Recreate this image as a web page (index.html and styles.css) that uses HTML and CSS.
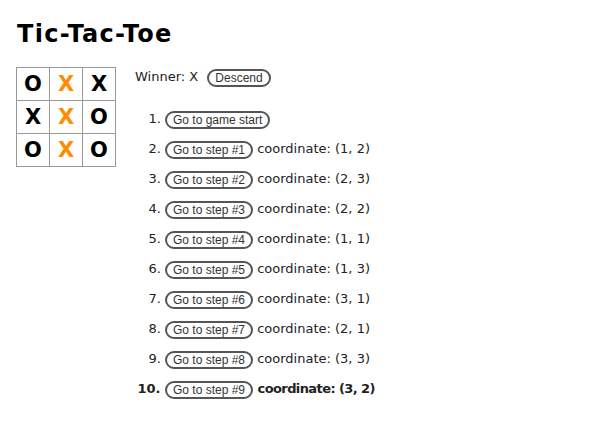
FILE: index.html
```html
<!DOCTYPE html>
<html>
<head>
<meta charset="utf-8">
<link rel="stylesheet" href="styles.css">
</head>
<body>
<h1 class="title">Tic-Tac-Toe</h1>
<div class="game">
  <div class="board">
    <div class="row"><span class="sq">O</span><span class="sq win">X</span><span class="sq">X</span></div>
    <div class="row"><span class="sq">X</span><span class="sq win">X</span><span class="sq">O</span></div>
    <div class="row"><span class="sq">O</span><span class="sq win">X</span><span class="sq">O</span></div>
  </div>
  <div class="info">
    <div class="status">Winner: X <button class="btn">Descend</button></div>
    <ol class="moves">
      <li><button class="btn">Go to game start</button></li>
      <li><button class="btn">Go to step #1</button> coordinate: (1, 2)</li>
      <li><button class="btn">Go to step #2</button> coordinate: (2, 3)</li>
      <li><button class="btn">Go to step #3</button> coordinate: (2, 2)</li>
      <li><button class="btn">Go to step #4</button> coordinate: (1, 1)</li>
      <li><button class="btn">Go to step #5</button> coordinate: (1, 3)</li>
      <li><button class="btn">Go to step #6</button> coordinate: (3, 1)</li>
      <li><button class="btn">Go to step #7</button> coordinate: (2, 1)</li>
      <li><button class="btn">Go to step #8</button> coordinate: (3, 3)</li>
      <li class="current"><button class="btn">Go to step #9</button> <span class="coord">coordinate: (3, 2)</span></li>
    </ol>
  </div>
</div>
</body>
</html>
```
FILE: styles.css
```css
body {
  margin: 0;
  padding: 0 16px;
  font-family: "Century Gothic", "URW Gothic", "DejaVu Sans", sans-serif;
  font-size: 13px;
  color: #222;
  background: #fff;
}
.title {
  margin: 0;
  padding-top: 19px;
  font-size: 24px;
  line-height: 30px;
  font-weight: bold;
  color: #000;
  letter-spacing: 1.3px;
  padding-left: 1px;
}
.game {
  display: flex;
  margin-top: 18px;
}
.board {
  display: flex;
  flex-direction: column;
  align-self: flex-start;
}
.row {
  display: flex;
}
.sq {
  width: 32px;
  height: 32px;
  border: 1px solid #999;
  margin: 0 -1px -1px 0;
  font-size: 21px;
  font-weight: bold;
  line-height: 33px;
  text-align: center;
  color: #000;
  background: #fff;
}
.sq.win {
  color: #ff8c00;
}
.info {
  margin-left: 20px;
}
.status {
  height: 20px;
  line-height: 20px;
}
.btn {
  font-family: "Liberation Sans", Arial, sans-serif;
  font-size: 12px;
  color: #333;
  background: #fff;
  border: 2px solid #555;
  border-radius: 10px;
  padding: 0 6px;
  height: 18px;
  line-height: 14px;
  vertical-align: middle;
  margin-left: 5px;
}
.moves li .btn {
  margin-left: 0;
}
.moves {
  margin: 22px 0 0;
  padding-left: 30px;
}
.moves li {
  height: 30px;
  line-height: 20px;
}
.moves li.current {
  font-weight: bold;
}
.coord {
  letter-spacing: -0.6px;
}
```
